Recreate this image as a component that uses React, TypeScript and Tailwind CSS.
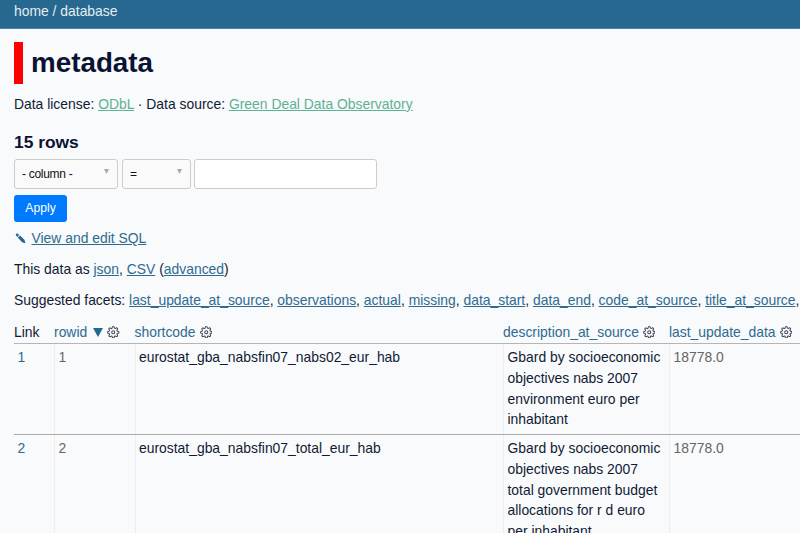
import type { ReactNode } from "react";

function Cog() {
  return (
    <svg className="ml-[4px] h-[12.5px] w-[12.5px] shrink-0 text-[#40465a]" viewBox="0 0 24 24" fill="none" stroke="currentColor" strokeWidth="2" strokeLinecap="round" strokeLinejoin="round">
      <circle cx="12" cy="12" r="3" />
      <path d="M19.4 15a1.65 1.65 0 0 0 .33 1.82l.06.06a2 2 0 0 1 0 2.83 2 2 0 0 1-2.83 0l-.06-.06a1.65 1.65 0 0 0-1.82-.33 1.65 1.65 0 0 0-1 1.51V21a2 2 0 0 1-2 2 2 2 0 0 1-2-2v-.09A1.65 1.65 0 0 0 9 19.4a1.65 1.65 0 0 0-1.82.33l-.06.06a2 2 0 0 1-2.83 0 2 2 0 0 1 0-2.83l.06-.06a1.65 1.65 0 0 0 .33-1.82 1.65 1.65 0 0 0-1.51-1H3a2 2 0 0 1-2-2 2 2 0 0 1 2-2h.09A1.65 1.65 0 0 0 4.6 9a1.65 1.65 0 0 0-.33-1.82l-.06-.06a2 2 0 0 1 0-2.83 2 2 0 0 1 2.83 0l.06.06a1.65 1.65 0 0 0 1.82.33H9a1.65 1.65 0 0 0 1-1.51V3a2 2 0 0 1 2-2 2 2 0 0 1 2 2v.09a1.65 1.65 0 0 0 1 1.51 1.65 1.65 0 0 0 1.82-.33l.06-.06a2 2 0 0 1 2.83 0 2 2 0 0 1 0 2.83l-.06.06a1.65 1.65 0 0 0-.33 1.82V9a1.65 1.65 0 0 0 1.51 1H21a2 2 0 0 1 2 2 2 2 0 0 1-2 2h-.09a1.65 1.65 0 0 0-1.51 1z" />
    </svg>
  );
}

function Link({ children }: { children: ReactNode }) {
  return <a className="text-[#2f6a91] underline">{children}</a>;
}

function Select({ label, className }: { label: string; className: string }) {
  return (
    <div className={`flex h-[30px] items-center justify-between rounded-[3px] border border-[#ccc] bg-[#fafafa] pr-[8px] pl-[7px] text-[12px] tracking-[-0.3px] text-[#111] ${className}`}>
      <span>{label}</span>
      <svg className="mb-[4px] h-[5px] w-[5px] text-[#aaa]" viewBox="0 0 5 5">
        <path d="M0 0h5L2.5 5z" fill="currentColor" />
      </svg>
    </div>
  );
}

const facets = ["last_update_at_source", "observations", "actual", "missing", "data_start", "data_end", "code_at_source", "title_at_source"];

const rows = [
  { id: 1, code: "eurostat_gba_nabsfin07_nabs02_eur_hab", lines: ["Gbard by socioeconomic", "objectives nabs 2007", "environment euro per", "inhabitant"], updated: "18778.0", height: "h-[91px]" },
  { id: 2, code: "eurostat_gba_nabsfin07_total_eur_hab", lines: ["Gbard by socioeconomic", "objectives nabs 2007", "total government budget", "allocations for r d euro", "per inhabitant"], updated: "18778.0", height: "h-[112px]" },
];

const columns = "grid grid-cols-[40px_80.5px_368.5px_166px_200px]";
const cell = "border-l border-[#eee] pt-[3px] pl-[3.5px]";

export default function App() {
  return (
    <div className="h-[533px] w-[800px] overflow-hidden bg-[#f8fafb] font-['Liberation_Sans',Arial,sans-serif] text-[13.9px] leading-[20.8px] whitespace-nowrap text-[#111a35]">
      <header className="h-[29px] border-b border-[#4d83a5] bg-[#276890] pt-px pl-[14px] text-[#e4edf2]">home / database</header>
      <main className="pl-[14px]">
        <h1 className="mt-[13.4px] flex h-[41.6px] items-center border-l-[9px] border-[#ff0000] pt-px pl-[8px] text-[27.8px] font-bold text-[#0c1234]">metadata</h1>
        <p className="mt-[10px]">
          Data license: <a className="text-[#5fb193] underline">ODbL</a> · Data source: <a className="text-[#5fb193] underline">Green Deal Data Observatory</a>
        </p>
        <h3 className="mt-[15px] h-[29.2px] pt-[2px] text-[17.4px] font-bold text-[#0c1234]">15 rows</h3>
        <div className="flex gap-[4px]">
          <Select label="- column -" className="w-[104px]" />
          <Select label="=" className="w-[69px]" />
          <input className="h-[30px] w-[183px] -ml-px rounded-[3px] border border-[#ccc] bg-white" />
        </div>
        <button className="mt-[6px] flex h-[27px] w-[53px] items-center justify-center rounded-[3px] bg-[#007bff] text-[12.2px] text-white">Apply</button>
        <p className="mt-[6px] flex">
          <svg className="mt-[5px] mr-[5.5px] ml-[1px] h-[11px] w-[11px]" viewBox="0 0 11 11">
            <path d="M.8 2C.6.8 1.7.2 2.8.7L4.2 2 2.2 4zM2.8 4.6l2.2-2.1 4.4 4.2 1.1 3.5-3.4-1z" fill="#276890" />
          </svg>
          <Link>View and edit SQL</Link>
        </p>
        <p className="mt-[10px]">
          This data as <Link>json</Link>, <Link>CSV</Link> (<Link>advanced</Link>)
        </p>
        <p className="mt-[10.6px]">
          Suggested facets: {facets.map((f) => <span key={f}><Link>{f}</Link>, </span>)}
        </p>
        <div className={`${columns} mt-[10.4px] h-[22.6px] w-[855px] border-b border-[#b5b5b5] text-[#2f6a91]`}>
          <div className="pt-[.6px] text-[#111a35]">Link</div>
          <div className="flex items-center">
            rowid
            <svg className="ml-[6px] h-[9px] w-[10px]" viewBox="0 0 10 9"><path d="M0 0h10L5 9z" fill="#276890" /></svg>
            <Cog />
          </div>
          <div className="flex items-center">shortcode<Cog /></div>
          <div className="flex items-center">description_at_source<Cog /></div>
          <div className="flex items-center">last_update_data<Cog /></div>
        </div>
        {rows.map((r) => (
          <div key={r.id} className={`${columns} ${r.height} w-[855px] border-b border-[#aaa]`}>
            <div className="pt-[3px] pl-[3.5px] text-[#2f6a91]">{r.id}</div>
            <div className={`${cell} text-[#666]`}>{r.id}</div>
            <div className={cell}>{r.code}</div>
            <div className={cell}>{r.lines.map((l) => <div key={l}>{l}</div>)}</div>
            <div className={`${cell} text-[#666]`}>{r.updated}</div>
          </div>
        ))}
      </main>
    </div>
  );
}
